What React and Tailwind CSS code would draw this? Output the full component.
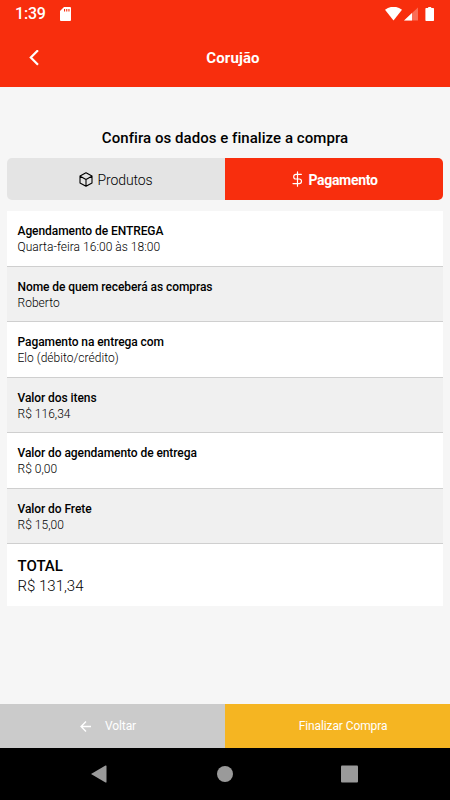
import { useState } from 'react';

const details = [
  { label: 'Agendamento de ENTREGA', value: 'Quarta-feira 16:00 às 18:00' },
  { label: 'Nome de quem receberá as compras', value: 'Roberto' },
  { label: 'Pagamento na entrega com', value: 'Elo (débito/crédito)' },
  { label: 'Valor dos itens', value: 'R$ 116,34' },
  { label: 'Valor do agendamento de entrega', value: 'R$ 0,00' },
  { label: 'Valor do Frete', value: 'R$ 15,00' },
];

const StatusBar = () => (
  <div className="flex h-[28px] items-center justify-between pl-[15px] pr-[15px] text-white">
    <div className="flex items-center">
      <span className="w-[45px] text-[16px] leading-[28px] font-medium tracking-[-0.2px]">1:39</span>
      <svg className="h-[14px] w-[11px]" viewBox="0 0 11 14">
        <path
          fill="currentColor"
          fillRule="evenodd"
          d="M4 0h6a1 1 0 0 1 1 1v12a1 1 0 0 1-1 1H1a1 1 0 0 1-1-1V4zM4 2v2.400h1.100V2zM6.200 2v2.400h1.100V2zM8.400 2v2.400h1.100V2z"
        />
      </svg>
    </div>
    <svg className="h-[15px] w-[50px]" viewBox="0 0 50 15" fill="currentColor">
      <path d="M0 2.800Q8.500-3.400 17 2.800L8.500 13.500z" />
      <path d="M33 .5v13H19z" opacity="0.3" />
      <path d="M27 6.100V13.500H19z" />
      <path d="M43.200 1V0h3v1H48.300q.7 0 .7.700v11.600q0 .7-.7.700h-7.200q-.7 0-.7-.7V1.700q0-.7.7-.7z" />
    </svg>
  </div>
);

const Header = () => (
  <header className="h-[87px] bg-[#f82e0d] text-white">
    <StatusBar />
    <div className="grid h-[59px] grid-cols-[1fr_auto_1fr] items-center">
      <button aria-label="Voltar" className="ml-[28px] w-[11px]">
        <svg className="h-[16px] w-[11px]" viewBox="0 0 11 16" fill="none" stroke="currentColor" strokeWidth="2.2">
          <path d="M10 .3L2.800 7.500l7.200 7.200" />
        </svg>
      </button>
      <h1 className="pt-px pl-[16px] text-[15px] font-bold tracking-[0.1px]">Corujão</h1>
      <span />
    </div>
  </header>
);

const BoxIcon = () => (
  <svg
    className="h-[15px] w-[14px]"
    viewBox="0 0 14 15"
    fill="none"
    stroke="currentColor"
    strokeWidth="1.1"
    strokeLinejoin="round"
    strokeLinecap="round"
  >
    <path d="M7 .8l6 3.300v6.800l-6 3.400-6-3.400V4.100zM1.200 4.300L7 7.600l5.800-3.300M7 7.600v6.500" />
  </svg>
);

const DollarIcon = () => (
  <svg
    className="h-[16px] w-[11px]"
    viewBox="0 0 11 16"
    fill="none"
    stroke="currentColor"
    strokeWidth="1.2"
    strokeLinecap="round"
    strokeLinejoin="round"
  >
    <path d="M5.500 .8v14.400M9.300 3.400H4a2.300 2.300 0 0 0 0 4.600h3.200a2.300 2.300 0 0 1 0 4.600H1" />
  </svg>
);

const Row = ({ label, value, striped }) => (
  <div
    className={`h-[55.5px] border-b border-[#cfcfcf] px-[10.5px] pt-[12px] text-[12px] leading-[16px] ${
      striped ? 'bg-[#f0f0f0]' : 'bg-white'
    }`}
  >
    <div className="font-medium tracking-[-0.07px]">{label}</div>
    <div className="font-light tracking-[0.03px]">{value}</div>
  </div>
);

const NavigationBar = () => (
  <div className="flex h-[52px] justify-center bg-black pt-[17px] text-[#9a9a9a]">
    <svg className="h-[18px] w-[268px]" viewBox="0 0 268 18" fill="currentColor">
      <path d="M0 9L14.500 .6q1-.4 1 .5v15.800q0 .9-1 .5z" />
      <circle cx="134" cy="9" r="8" />
      <rect x="250" y="0.500" width="17" height="17" rx="1" />
    </svg>
  </div>
);

const App = () => {
  const [tab, setTab] = useState('pagamento');
  const tabClass = (name) =>
    tab === name ? 'bg-[#f82e0d] font-bold text-white' : 'bg-[#e4e4e4] font-light text-black';

  return (
    <div className="flex h-[800px] w-[450px] flex-col bg-[#f6f6f6] font-['Roboto',sans-serif] text-black">
      <Header />

      <main className="flex-1 px-[7px] pt-[41px]">
        <h2 className="text-center text-[15px] leading-[20px] font-medium tracking-[0.05px]">
          Confira os dados e finalize a compra
        </h2>

        {/* Tabs */}
        <div className="mt-[10px] grid h-[42px] grid-cols-2 overflow-hidden rounded-[5px] text-[14px]">
          <button
            onClick={() => setTab('produtos')}
            className={`flex items-center justify-center gap-[4px] ${tabClass('produtos')}`}
          >
            <BoxIcon />
            <span className="pt-[2px] tracking-[-0.1px]">Produtos</span>
          </button>
          <button
            onClick={() => setTab('pagamento')}
            className={`flex items-center justify-center gap-[5px] pl-[2px] ${tabClass('pagamento')}`}
          >
            <DollarIcon />
            <span className="pt-[2px] tracking-[-0.3px]">Pagamento</span>
          </button>
        </div>

        {/* Order details */}
        <div className="mt-[11px]">
          {details.map((item, i) => (
            <Row key={item.label} label={item.label} value={item.value} striped={i % 2 === 1} />
          ))}
          <div className="h-[62px] bg-white px-[10.5px] pt-[12px] text-[15px] leading-[20px]">
            <div className="font-medium">TOTAL</div>
            <div className="font-light">R$ 131,34</div>
          </div>
        </div>
      </main>

      {/* Actions */}
      <footer className="flex h-[44px] text-[12px] tracking-[-0.1px] text-white">
        <button className="flex w-[225px] items-center bg-[#cbcbcb] pl-[80px]">
          <svg className="h-[11px] w-[11px]" viewBox="0 0 11 11" fill="none" stroke="currentColor" strokeWidth="1.4">
            <path d="M11 5.500H1.200M6 .6L1.100 5.500 6 10.400" />
          </svg>
          <span className="ml-[14px]">Voltar</span>
        </button>
        <button className="w-[225px] bg-[#f5b522] pl-[11px]">Finalizar Compra</button>
      </footer>

      <NavigationBar />
    </div>
  );
};

export default App;
